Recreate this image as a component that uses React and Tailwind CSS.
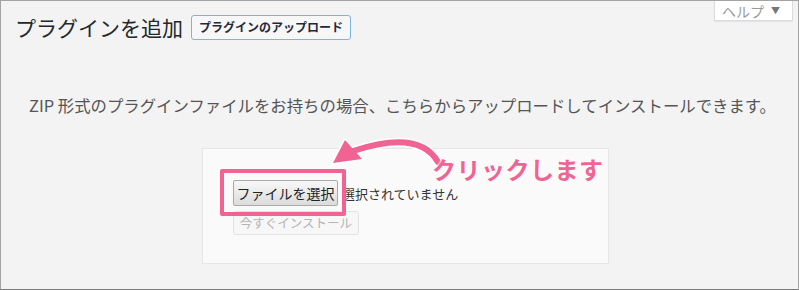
export default function App() {
  return (
    <div className="relative w-[799px] h-[290px] overflow-hidden border border-[#a3a3a3] border-b-[#7a7a7a] bg-[#f3f3f3] font-['Noto_Sans_CJK_JP',sans-serif] text-[#23282d]">
      {/* Help tab */}
      <div className="absolute top-[-1px] right-[5px] w-[79px] h-[21px] bg-white border border-[#dcdcdc] shadow-[0_1px_1px_rgba(0,0,0,0.06)] flex items-center justify-end gap-[7px] pr-[12px] text-[14px] leading-none text-[#9a9a9a]">
        <span>ヘルプ</span>
        <span className="text-[9px] text-[#72777c]">▼</span>
      </div>

      {/* Header */}
      <div className="flex items-center gap-[8px] pl-[14px] pt-[12px]">
        <h1 className="text-[21px] leading-[28px] font-normal text-[#23282d]">プラグインを追加</h1>
        <button className="h-[25px] px-[7px] rounded-[3px] border border-[#7eb4e0] bg-[#f7f7f7] text-[12px] font-bold text-[#1e2a3a] leading-none">
          プラグインのアップロード
        </button>
      </div>

      {/* Description */}
      <p className="mt-[53px] pl-[6px] text-center text-[16.4px] leading-[22px] text-[#555] whitespace-nowrap">
        ZIP 形式のプラグインファイルをお持ちの場合、こちらからアップロードしてインストールできます。
      </p>

      {/* Upload box */}
      <div className="mt-[32px] ml-[201px] w-[407px] h-[116px] bg-[#fafafa] border border-[#e6e6e6] pl-[30px] pt-[31px]">
        <div className="flex items-center gap-[4px] h-[26px]">
          <button className="h-[26px] w-[105px] shrink-0 rounded-[2px] border border-[#a9a9a9] bg-gradient-to-b from-[#f8f8f8] to-[#dcdcdc] text-[14px] leading-none text-[#222]">
            ファイルを選択
          </button>
          <span className="text-[13px] text-[#333] leading-none">選択されていません</span>
        </div>
        <button className="block mt-[5px] h-[24px] w-[126px] rounded-[3px] border border-[#e2e2e2] bg-[#f7f7f7] text-[12.5px] leading-none text-[#b4b4b4]">
          今すぐインストール
        </button>
      </div>

      {/* Annotation: highlight frame */}
      <div className="absolute left-[219px] top-[168px] w-[126px] h-[47px] border-[4px] border-[#f06392] rounded-[2px]" />

      {/* Annotation: arrow */}
      <svg className="absolute left-0 top-0" width="799" height="290" viewBox="0 0 799 290">
        <path d="M437 161 Q418 128 352 150" fill="none" stroke="#fff" strokeWidth="9" strokeLinecap="round" />
        <path d="M332 162 L344 139 L361 158 Z" fill="#fff" stroke="#fff" strokeWidth="3" strokeLinejoin="round" />
        <path d="M437 161 Q418 128 352 150" fill="none" stroke="#f06392" strokeWidth="6" strokeLinecap="round" />
        <path d="M332 162 L344 139 L361 158 Z" fill="#f06392" />
      </svg>

      {/* Annotation: label */}
      <div className="absolute left-[431px] top-[155px] text-[24px] leading-[26px] font-bold text-[#f06392] tracking-[0.5px] [text-shadow:0_0_2px_#fff,0_0_2px_#fff,0_0_3px_#fff]">
        クリックします
      </div>
    </div>
  );
}
